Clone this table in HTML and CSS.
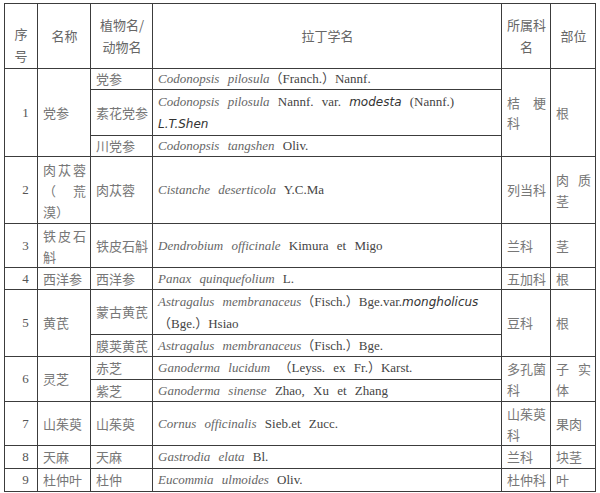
FILE: index.html
```html
<!DOCTYPE html>
<html lang="zh-CN">
<head>
<meta charset="utf-8">
<title>药材表</title>
<link rel="stylesheet" href="styles.css">
</head>
<body>
<table class="tbl">
  <colgroup>
    <col class="c1"><col class="c2"><col class="c3"><col class="c4"><col class="c5"><col class="c6">
  </colgroup>
  <thead>
    <tr class="h65">
      <th class="num xuhao">序号</th>
      <th>名称</th>
      <th class="tall">植物名/动物名</th>
      <th>拉丁学名</th>
      <th class="tall">所属科名</th>
      <th>部位</th>
    </tr>
  </thead>
  <tbody>
    <tr class="h21">
      <td class="num" rowspan="3">1</td>
      <td class="zh" rowspan="3">党参</td>
      <td class="zh">党参</td>
      <td class="lat"><i>Codonopsis pilosula</i>（Franch.）Nannf.</td>
      <td class="zh" rowspan="3">桔 梗 科</td>
      <td class="zh" rowspan="3">根</td>
    </tr>
    <tr class="h46">
      <td class="zh">素花党参</td>
      <td class="lat tall"><i>Codonopsis pilosula</i> Nannf. var. <span class="sans">modesta</span> (Nannf.)<br><span class="sans">L.T.Shen</span></td>
    </tr>
    <tr class="h21">
      <td class="zh">川党参</td>
      <td class="lat"><i>Codonopsis tangshen</i> Oliv.</td>
    </tr>
    <tr class="h67">
      <td class="num">2</td>
      <td class="zh tall">肉苁蓉（荒漠）</td>
      <td class="zh">肉苁蓉</td>
      <td class="lat"><i>Cistanche deserticola</i> Y.C.Ma</td>
      <td class="zh">列当科</td>
      <td class="zh tall">肉质茎</td>
    </tr>
    <tr class="h44">
      <td class="num">3</td>
      <td class="zh tall">铁皮石斛</td>
      <td class="zh">铁皮石斛</td>
      <td class="lat"><i>Dendrobium officinale</i> Kimura et Migo</td>
      <td class="zh">兰科</td>
      <td class="zh">茎</td>
    </tr>
    <tr class="h22">
      <td class="num">4</td>
      <td class="zh">西洋参</td>
      <td class="zh">西洋参</td>
      <td class="lat"><i>Panax quinquefolium</i> L.</td>
      <td class="zh">五加科</td>
      <td class="zh">根</td>
    </tr>
    <tr class="h45">
      <td class="num" rowspan="2">5</td>
      <td class="zh" rowspan="2">黄芪</td>
      <td class="zh">蒙古黄芪</td>
      <td class="lat tall"><i>Astragalus membranaceus</i>（Fisch.）Bge.var.<span class="sans">mongholicus</span><br>（Bge.）Hsiao</td>
      <td class="zh" rowspan="2">豆科</td>
      <td class="zh" rowspan="2">根</td>
    </tr>
    <tr class="h22">
      <td class="zh">膜荚黄芪</td>
      <td class="lat"><i>Astragalus membranaceus</i>（Fisch.）Bge.</td>
    </tr>
    <tr class="h23">
      <td class="num" rowspan="2">6</td>
      <td class="zh" rowspan="2">灵芝</td>
      <td class="zh">赤芝</td>
      <td class="lat"><i>Ganoderma lucidum</i> （Leyss. ex Fr.）Karst.</td>
      <td class="zh tall" rowspan="2">多孔菌科</td>
      <td class="zh tall" rowspan="2">子实体</td>
    </tr>
    <tr class="h22">
      <td class="zh">紫芝</td>
      <td class="lat"><i>Ganoderma sinense</i> Zhao, Xu et Zhang</td>
    </tr>
    <tr class="h44">
      <td class="num">7</td>
      <td class="zh">山茱萸</td>
      <td class="zh">山茱萸</td>
      <td class="lat"><i>Cornus officinalis</i> Sieb.et Zucc.</td>
      <td class="zh tall">山茱萸科</td>
      <td class="zh">果肉</td>
    </tr>
    <tr class="h23">
      <td class="num">8</td>
      <td class="zh">天麻</td>
      <td class="zh">天麻</td>
      <td class="lat"><i>Gastrodia elata</i> Bl.</td>
      <td class="zh">兰科</td>
      <td class="zh">块茎</td>
    </tr>
    <tr class="h23">
      <td class="num">9</td>
      <td class="zh">杜仲叶</td>
      <td class="zh">杜仲</td>
      <td class="lat"><i>Eucommia ulmoides</i> Oliv.</td>
      <td class="zh">杜仲科</td>
      <td class="zh">叶</td>
    </tr>
  </tbody>
</table>
</body>
</html>
```

FILE: styles.css
```css
html, body {
  margin: 0;
  padding: 0;
  background: #ffffff;
}

.tbl {
  border-collapse: collapse;
  table-layout: fixed;
  width: 592px;
  margin: 3px 0 0 4px;
  font-family: "Liberation Serif", "Noto Sans CJK SC", serif;
  font-size: 13px;
  line-height: 20px;
  color: #555555;
}

.c1 { width: 33px; }
.c2 { width: 53px; }
.c3 { width: 62px; }
.c4 { width: 349px; }
.c5 { width: 49px; }
.c6 { width: 45px; }

.tbl th,
.tbl td {
  border: 1px solid #3c3c3c;
  padding: 0 4px 0 5px;
  vertical-align: middle;
  text-align: justify;
  font-weight: normal;
  overflow: visible;
}

.tbl .tall {
  line-height: 21px;
}

.tbl th.tall {
  line-height: 22px;
}

.tbl th {
  text-align: center;
  color: #666666;
  font-family: "Noto Sans CJK SC", sans-serif;
}

.tbl th.xuhao {
  padding-top: 18px;
  line-height: 22px;
}

.tbl td.num {
  text-align: center;
  padding: 0 0 0 9px;
  color: #555555;
}

.tbl th.num {
  padding-left: 4px;
  padding-right: 4px;
}

.tbl td.zh {
  font-family: "Noto Sans CJK SC", sans-serif;
  color: #777777;
}

.tbl td.lat {
  text-align: left;
  word-spacing: 5px;
  color: #444444;
}

.tbl td.lat i {
  color: #666666;
}

.sans {
  font-family: "DejaVu Sans", sans-serif;
  font-style: italic;
  font-size: 12px;
  word-spacing: 0;
  color: #333333;
}

.h65 { height: 65px; }
.h21 { height: 21px; }
.h22 { height: 22px; }
.h23 { height: 23px; }
.h44 { height: 44px; }
.h45 { height: 45px; }
.h46 { height: 46px; }
.h67 { height: 67px; }
```
